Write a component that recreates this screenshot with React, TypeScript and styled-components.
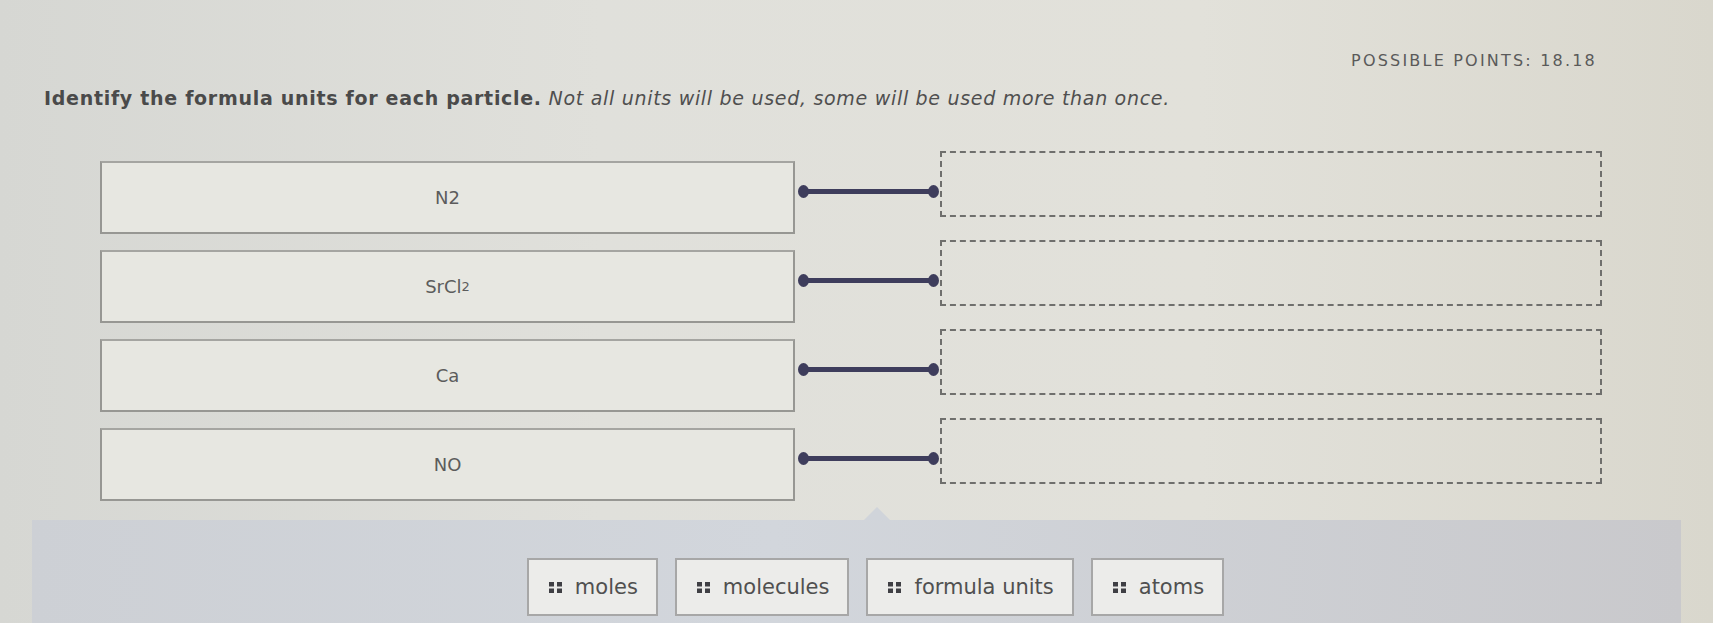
import React from "react";
import styled, { createGlobalStyle } from "styled-components";

const GlobalStyle = createGlobalStyle`
  html, body {
    margin: 0;
    padding: 0;
  }
  body {
    font-family: "DejaVu Sans", "Liberation Sans", sans-serif;
    background: #dcdcd7;
    color: #555;
  }
`;

const pairs = [
  { id: "n2", label: <>N2</> },
  { id: "srcl2", label: <>SrCl<sub>2</sub></> },
  { id: "ca", label: <>Ca</> },
  { id: "no", label: <>NO</> },
];

const units = ["moles", "molecules", "formula units", "atoms"];

const App = () => {
  return (
    <>
      <GlobalStyle />
      <Page>
        <PointsRow>
          <Points>POSSIBLE POINTS: 18.18</Points>
        </PointsRow>
        <Prompt>
          <strong>Identify the formula units for each particle.</strong>{" "}
          <em>Not all units will be used, some will be used more than once.</em>
        </Prompt>

        <MatchList>
          {pairs.map((p) => (
            <MatchRow key={p.id}>
              <Term>{p.label}</Term>
              <Connector>
                <Knob />
                <Bar />
                <Knob />
              </Connector>
              <DropZone />
            </MatchRow>
          ))}
        </MatchList>

        <Bank>
          <ChipRow>
            {units.map((u) => (
              <Chip key={u}>
                <Handle viewBox="0 0 13 11" aria-hidden>
                  <rect x="0" y="0" width="5" height="4.5" />
                  <rect x="8" y="0" width="5" height="4.5" />
                  <rect x="0" y="6.5" width="5" height="4.5" />
                  <rect x="8" y="6.5" width="5" height="4.5" />
                </Handle>
                {u}
              </Chip>
            ))}
          </ChipRow>
        </Bank>
      </Page>
    </>
  );
};

export default App;

const Page = styled.div`
  width: 1713px;
  height: 623px;
  overflow: hidden;
  display: flex;
  flex-direction: column;
  background: linear-gradient(
    90deg,
    #d6d7d3 0%,
    #e0e0db 35%,
    #e2e1da 70%,
    #d9d7cd 100%
  );
`;

const PointsRow = styled.div`
  display: flex;
  justify-content: flex-end;
  padding: 51px 116px 0 0;
`;

const Points = styled.span`
  font-size: 16px;
  letter-spacing: 2.2px;
  color: #5a5a5a;
`;

const Prompt = styled.p`
  margin: 17px 0 0 44px;
  font-size: 19px;
  letter-spacing: 0.7px;
  color: #4f4f4f;

  strong {
    font-weight: bold;
    color: #4a4a4a;
  }

  em {
    font-style: italic;
  }
`;

const MatchList = styled.div`
  display: flex;
  flex-direction: column;
  gap: 16px;
  margin-top: 52px;
  padding-left: 100px;
`;

const MatchRow = styled.div`
  display: flex;
  align-items: flex-start;
  height: 73px;
`;

const Term = styled.div`
  box-sizing: border-box;
  width: 695px;
  height: 73px;
  display: flex;
  align-items: center;
  justify-content: center;
  background: #e7e7e1;
  border: 2px solid #979793;
  border-top-color: #a5a5a1;
  font-size: 18px;
  color: #5c5c5c;

  sub {
    font-size: 13px;
    vertical-align: -4px;
  }
`;

const Connector = styled.div`
  width: 145px;
  height: 73px;
  display: flex;
  align-items: center;
  padding: 0 1px 0 3px;
  box-sizing: border-box;
  margin-top: -6px;
`;

const Knob = styled.span`
  flex: none;
  width: 11px;
  height: 13px;
  border-radius: 50%;
  background: #3e3d5c;
`;

const Bar = styled.span`
  flex: 1;
  height: 5px;
  background: #3e3d5c;
  margin: 0 -2px;
`;

const DropZone = styled.div`
  box-sizing: border-box;
  width: 662px;
  height: 66px;
  margin-top: -10px;
  border: 2px dashed #6f6f6d;
`;

const Bank = styled.div`
  position: relative;
  margin: auto 32px 0;
  height: 103px;
  background: linear-gradient(90deg, #cdd0d5 0%, #d2d6dc 45%, #c9c9cc 100%);

  &::before {
    content: "";
    position: absolute;
    left: 832px;
    top: -13px;
    border: 13px solid transparent;
    border-top: 0;
    border-bottom-color: #d0d4da;
  }
`;

const ChipRow = styled.div`
  display: flex;
  justify-content: center;
  gap: 17px;
  padding: 38px 0 0 38px;
`;

const Chip = styled.div`
  box-sizing: border-box;
  height: 58px;
  display: flex;
  align-items: center;
  gap: 13px;
  padding: 0 18px 0 20px;
  background: #ececea;
  border: 2px solid #a7a7a7;
  font-size: 21px;
  color: #505050;
`;

const Handle = styled.svg`
  width: 13px;
  height: 11px;
  fill: #3f3f44;
`;
